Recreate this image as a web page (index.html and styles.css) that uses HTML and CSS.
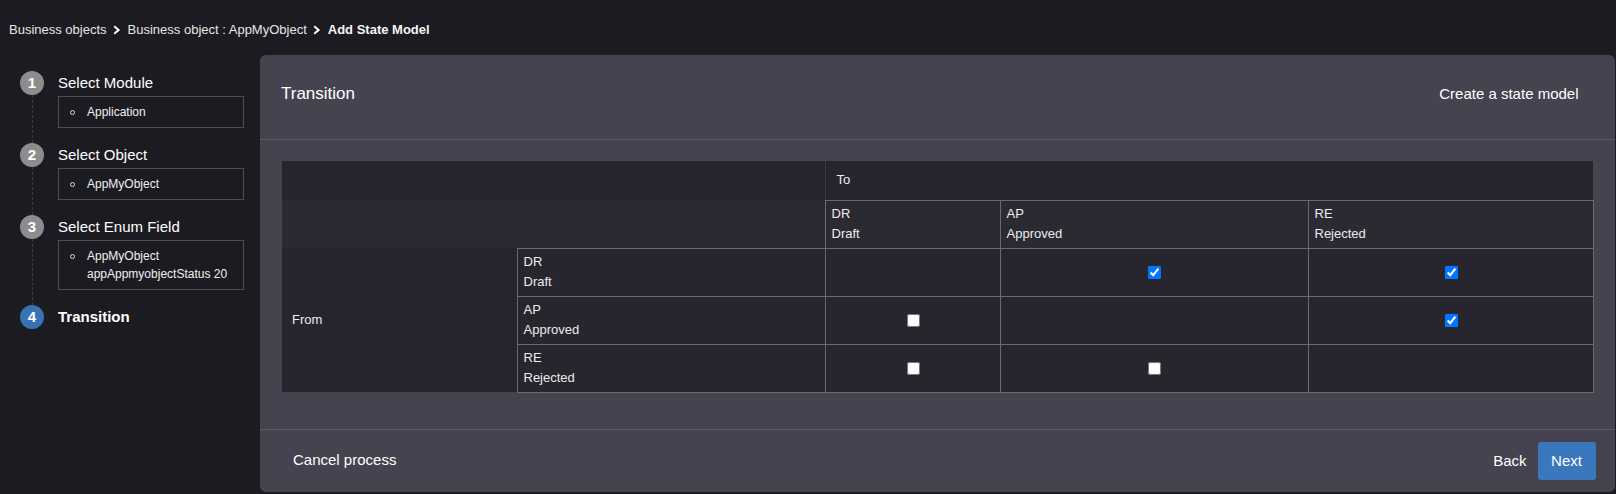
FILE: index.html
```html
<!DOCTYPE html>
<html lang="en">
<head>
<meta charset="utf-8">
<title>Add State Model</title>
<link rel="stylesheet" href="styles.css">
</head>
<body>
<header class="crumbs">
  <span class="crumb">Business objects</span>
  <svg class="chev" width="10" height="10" viewBox="0 0 10 10"><path d="M2.2 1.2 L6.6 5 L2.2 8.8" fill="none" stroke="#ffffff" stroke-width="2"/></svg>
  <span class="crumb">Business object : AppMyObject</span>
  <svg class="chev" width="10" height="10" viewBox="0 0 10 10"><path d="M2.2 1.2 L6.6 5 L2.2 8.8" fill="none" stroke="#ffffff" stroke-width="2"/></svg>
  <span class="crumb current">Add State Model</span>
</header>
<div class="layout">
  <aside class="steps">
    <div class="step">
      <div class="ind"><span class="num">1</span><span class="rail"></span></div>
      <div class="step-body">
        <div class="step-title">Select Module</div>
        <div class="summary"><div class="item"><span class="dot"></span><span>Application</span></div></div>
      </div>
    </div>
    <div class="step">
      <div class="ind"><span class="num">2</span><span class="rail"></span></div>
      <div class="step-body">
        <div class="step-title">Select Object</div>
        <div class="summary"><div class="item"><span class="dot"></span><span>AppMyObject</span></div></div>
      </div>
    </div>
    <div class="step">
      <div class="ind"><span class="num">3</span><span class="rail"></span></div>
      <div class="step-body">
        <div class="step-title">Select Enum Field</div>
        <div class="summary"><div class="item"><span class="dot"></span><span>AppMyObject<br>appAppmyobjectStatus 20</span></div></div>
      </div>
    </div>
    <div class="step last">
      <div class="ind"><span class="num active">4</span></div>
      <div class="step-body">
        <div class="step-title bold">Transition</div>
      </div>
    </div>
  </aside>
  <section class="panel">
    <div class="panel-head">
      <h2 class="panel-title">Transition</h2>
      <span class="panel-sub">Create a state model</span>
    </div>
    <div class="panel-body">
      <table class="matrix">
        <colgroup>
          <col class="c-from"><col class="c-label"><col class="c-dr"><col class="c-ap"><col class="c-re">
        </colgroup>
        <tr class="r-to">
          <td colspan="2"></td>
          <td colspan="3" class="to">To</td>
        </tr>
        <tr class="r-head">
          <td colspan="2" class="blank"></td>
          <td class="lbl">DR<br>Draft</td>
          <td class="lbl">AP<br>Approved</td>
          <td class="lbl">RE<br>Rejected</td>
        </tr>
        <tr class="r-data">
          <td rowspan="3" class="from">From</td>
          <td class="lbl">DR<br>Draft</td>
          <td class="cell"></td>
          <td class="cell"><input type="checkbox" checked></td>
          <td class="cell"><input type="checkbox" checked></td>
        </tr>
        <tr class="r-data">
          <td class="lbl">AP<br>Approved</td>
          <td class="cell"><input type="checkbox"></td>
          <td class="cell"></td>
          <td class="cell"><input type="checkbox" checked></td>
        </tr>
        <tr class="r-data">
          <td class="lbl">RE<br>Rejected</td>
          <td class="cell"><input type="checkbox"></td>
          <td class="cell"><input type="checkbox"></td>
          <td class="cell"></td>
        </tr>
      </table>
    </div>
    <div class="panel-foot">
      <button class="btn link cancel">Cancel process</button>
      <div class="actions">
        <button class="btn link back">Back</button>
        <button class="btn primary">Next</button>
      </div>
    </div>
  </section>
</div>
</body>
</html>
```

FILE: styles.css
```css
* { box-sizing: border-box; }
html, body { margin: 0; padding: 0; }
body {
  width: 1616px;
  height: 494px;
  background: #1c1b21;
  color: #f2f2f2;
  font-family: "Liberation Sans", Arial, sans-serif;
  overflow: hidden;
}

.crumbs {
  height: 55px;
  padding: 21px 9px 0;
  display: flex;
  align-items: flex-start;
  font-size: 13px;
  line-height: 18px;
  color: #e6e6e6;
}
.crumbs .chev { margin: 4px 6px 0 5px; flex: none; }
.crumbs .current { font-weight: bold; color: #f4f4f4; }

.layout {
  display: flex;
  height: 437px;
}

.steps {
  width: 260px;
  flex: none;
  padding: 16px 16px 0 20px;
}
.step {
  display: flex;
  gap: 14px;
}
.ind {
  width: 24px;
  flex: none;
  display: flex;
  flex-direction: column;
  align-items: center;
}
.num {
  width: 24px;
  height: 24px;
  border-radius: 50%;
  background: #8d8d8f;
  color: #ffffff;
  font-weight: bold;
  font-size: 15px;
  line-height: 24px;
  text-align: center;
  flex: none;
}
.num.active { background: #3673b5; }
.rail {
  flex: 1;
  width: 0;
  border-left: 1px dashed #3c3b43;
}
.step-body {
  flex: 1;
  padding-bottom: 15px;
}
.step.last .step-body { padding-bottom: 0; }
.step-title {
  font-size: 15px;
  line-height: 24px;
  color: #ffffff;
}
.step-title.bold { font-weight: bold; }
.summary {
  margin-top: 1px;
  border: 1px solid #4f4e56;
  padding: 6px 0 6px 11px;
  font-size: 12px;
  line-height: 18px;
  color: #f0f0f0;
}
.item { display: flex; align-items: flex-start; gap: 12px; }
.dot {
  width: 5px;
  height: 5px;
  border: 1px solid #d8d8d8;
  border-radius: 50%;
  margin-top: 7px;
  flex: none;
}

.panel {
  flex: 1;
  margin: 0 2px 0 0;
  background: #45434f;
  border-radius: 6px;
  display: flex;
  flex-direction: column;
}
.panel-head {
  display: flex;
  justify-content: space-between;
  align-items: flex-start;
  padding: 27px 36px 33px 21px;
  border-bottom: 1px solid #5d5b66;
}
.panel-title {
  margin: 0;
  font-size: 17px;
  font-weight: normal;
  line-height: 24px;
  color: #ffffff;
}
.panel-sub {
  font-size: 15px;
  line-height: 24px;
  color: #ffffff;
}
.panel-body {
  padding: 21px 21px 36px 22px;
}

.matrix {
  width: 100%;
  table-layout: fixed;
  border-collapse: collapse;
  font-size: 13px;
  line-height: 20px;
  color: #ececec;
}
.c-from { width: 235px; }
.c-label { width: 308px; }
.c-dr { width: 175px; }
.c-ap { width: 308px; }
.c-re { width: 285px; }
.matrix td {
  padding: 3px 5px 3px 6px;
  vertical-align: middle;
}
.r-to td {
  background: #26252e;
  height: 39px;
  padding-left: 11px;
}
.r-to td.to { border-left: 1px dotted #504f58; }
.r-head td {
  background: #2b2a33;
  height: 48px;
}
.r-data td {
  background: #27262f;
  height: 48px;
}
.matrix td.lbl,
.matrix td.cell {
  border: 1px solid #6b6b6b;
}
.matrix td.from {
  background: #26252d;
  padding-left: 10px;
}
.matrix td.cell { text-align: center; }
.matrix input[type="checkbox"] {
  margin: 0;
  width: 13px;
  height: 13px;
  vertical-align: middle;
}

.panel-foot {
  flex: 1;
  border-top: 1px solid #5d5b66;
  padding: 12px 19px 0 20px;
  display: flex;
  justify-content: space-between;
  align-items: flex-start;
}
.btn {
  font-family: "Liberation Sans", Arial, sans-serif;
  font-size: 15px;
  height: 38px;
  border: none;
  border-radius: 3px;
  color: #ffffff;
  background: transparent;
  cursor: pointer;
}
.btn.cancel { padding: 0 13px; margin-top: -1px; }
.actions { display: flex; align-items: center; }
.btn.back { padding: 0 6px; margin-right: 5px; }
.btn.primary {
  background: #3a77bd;
  padding: 0 13px;
  width: 58px;
}
```
